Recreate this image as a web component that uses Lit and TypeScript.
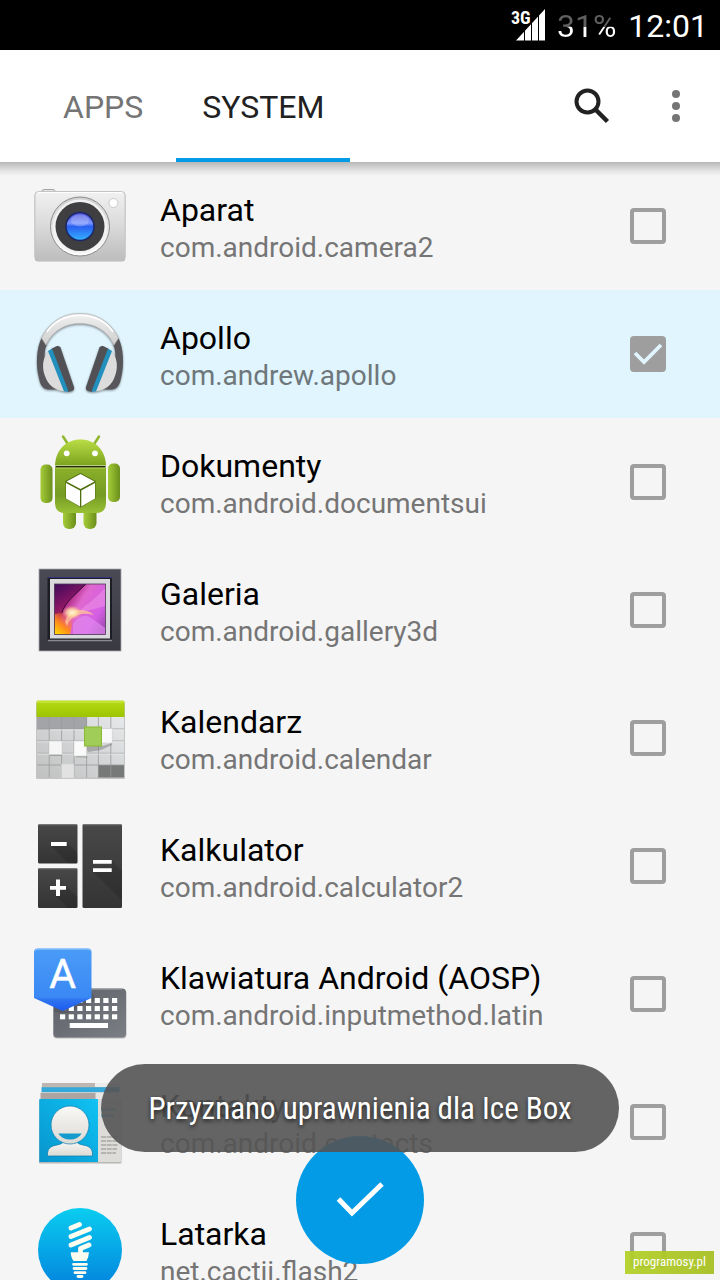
import { LitElement, html, svg, css, type SVGTemplateResult } from "lit";
import { customElement, state } from "lit/decorators.js";

interface AppEntry {
  name: string;
  pkg: string;
  icon: SVGTemplateResult;
  checked?: boolean;
}

const camera = svg`
  <defs>
    <linearGradient id="cam-body" x2="0" y2="1"><stop stop-color="#f1f1f1"/><stop offset=".5" stop-color="#dadada"/><stop offset="1" stop-color="#bdbdbd"/></linearGradient>
    <linearGradient id="cam-lens" x2="0" y2="1"><stop stop-color="#4a50d8"/><stop offset=".38" stop-color="#7c97ff"/><stop offset=".5" stop-color="#2a5ff0"/><stop offset="1" stop-color="#35b4ff"/></linearGradient>
    <linearGradient id="cam-ring" x2="0" y2="1"><stop stop-color="#cfcfcf"/><stop offset="1" stop-color="#ffffff"/></linearGradient>
  </defs>
  <rect x="10" y="11.500" width="13" height="6" rx="2" fill="#e4e4e4" stroke="#a4a4a4"/>
  <rect x="2.500" y="14" width="91" height="69.500" rx="4" fill="#000" opacity=".25"/>
  <rect x="3" y="13.500" width="90" height="68.500" rx="3.500" fill="url(#cam-body)" stroke="#c4c4c4"/>
  <path d="M6 14.500H90" stroke="#fff"/>
  <circle cx="48" cy="48.500" r="29.500" fill="url(#cam-ring)" stroke="#8c8c8c"/>
  <circle cx="48" cy="48.500" r="27" fill="#f2f2f2"/>
  <circle cx="48" cy="48.500" r="24.500" fill="#3f3f41"/>
  <circle cx="48" cy="48.500" r="14" fill="url(#cam-lens)" stroke="#1c2768" stroke-width="1.500"/>
  <ellipse cx="48" cy="42.500" rx="9" ry="6" fill="#fff" opacity=".22"/>
  <circle cx="81.500" cy="25" r="4.500" fill="#fff" stroke="#c9c9c9"/>`;

const earSide = svg`
  <path d="M10 31C4 42 4 60 6.500 70C8 78 10 83 16 83.500H25L14 62C12 54 12 44 15 38Z" fill="#57575b"/>
  <path d="M17 44.500C10 52 10 62 13 70C16 79 23 85 34 85.500Z" fill="#dcdcdc"/>
  <path d="M19 43L25 40Q27.500 39.500 28.500 41.500L42 81Q42.500 84 40 85L36 86Z" fill="#515155"/>
  <path d="M16 45L20 42.700L36.500 85.500L32 85.500Z" fill="#2190bd"/>`;

const headphones = svg`
  <defs><linearGradient id="hp-band" x2="0" y2="1"><stop stop-color="#f0f0f0"/><stop offset="1" stop-color="#cfcfcf"/></linearGradient></defs>
  <g filter="drop-shadow(0 1px 1px rgba(0,0,0,.45))">
    ${earSide}
    <g transform="matrix(-1 0 0 1 96 0)">${earSide}</g>
    <path d="M9.500 32C18 15 32 7.500 48 7.500S78 15 86.500 32L82 39C75 24 62 17.500 48 17.500S21 24 14 39Z" fill="url(#hp-band)" stroke="#b4b4b4" stroke-width=".7"/>
    <path d="M15 26C23 14 35 9.500 48 9.500S73 14 81 26" fill="none" stroke="#fff" stroke-width="1.500"/>
  </g>`;

const droid = svg`
  <defs>
    <linearGradient id="dr-head" x2="0" y2="1"><stop stop-color="#b9dd45"/><stop offset="1" stop-color="#7da31f"/></linearGradient>
    <linearGradient id="dr-body" x2="0" y2="1"><stop stop-color="#8bb02a"/><stop offset=".6" stop-color="#769b24"/><stop offset="1" stop-color="#98c035"/></linearGradient>
    <linearGradient id="dr-limb"><stop stop-color="#a5cc38"/><stop offset=".5" stop-color="#88ae2a"/><stop offset="1" stop-color="#6a8e1b"/></linearGradient>
  </defs>
  <path d="M31 2.500L35.500 9.500M67 2.500L62.500 9.500" stroke="#8fb62d" stroke-width="2.500" stroke-linecap="round"/>
  <rect x="31" y="70" width="13" height="25" rx="6" fill="url(#dr-limb)"/>
  <rect x="51.500" y="70" width="13" height="25" rx="6" fill="url(#dr-limb)"/>
  <rect x="8.500" y="30.500" width="12" height="38.500" rx="5" fill="url(#dr-limb)"/>
  <rect x="76" y="29.500" width="12" height="38.500" rx="5" fill="url(#dr-limb)"/>
  <path d="M23 31.500C23.500 16 34 5.500 48.500 5.500S73.500 16 74 31.500Z" fill="url(#dr-head)"/>
  <path d="M23 33.500H74V69Q74 79 64 79H33Q23 79 23 69Z" fill="url(#dr-body)"/>
  <path d="M23.500 32.700H73.500" stroke="#222f04" stroke-width="1.400"/>
  <path d="M24 34.300H73" stroke="#a5cd42"/>
  <circle cx="34.700" cy="19.300" r="2.900" fill="#fff"/><circle cx="63" cy="19.300" r="2.900" fill="#fff"/>
  <path d="M48.500 39L63.500 47V64.500L48.500 73.500L33.500 64.500V47Z" fill="#4e6e0e"/>
  <path d="M48.500 40L62.500 47.500L48.500 55L34.500 47.500ZM34 49L48 56.500V72.500L34 64.500ZM63 49L49.300 56.500V72.500L63 64.500Z" fill="#fff"/>`;

const gallery = svg`
  <defs>
    <linearGradient id="ga-pic" x1="0" y1=".2" x2="1" y2=".8"><stop stop-color="#57106f"/><stop offset=".22" stop-color="#a81f72"/><stop offset=".45" stop-color="#df68cf"/><stop offset=".8" stop-color="#d55fe4"/><stop offset="1" stop-color="#a64bb8"/></linearGradient>
    <linearGradient id="ga-dark" x1="0" y1="0" x2=".4" y2="1"><stop stop-color="#3d0a5c"/><stop offset=".5" stop-color="#8a1664"/><stop offset="1" stop-color="#e2452e"/></linearGradient>
    <linearGradient id="ga-fire" x1="0" y1="1" x2=".7" y2="0"><stop stop-color="#ffe000"/><stop offset=".45" stop-color="#ff8a1c"/><stop offset="1" stop-color="#ff5a50" stop-opacity="0"/></linearGradient>
    <linearGradient id="ga-frame" x2="0" y2="1"><stop stop-color="#4a4a55"/><stop offset="1" stop-color="#393942"/></linearGradient>
    <radialGradient id="ga-glow"><stop stop-color="#fff8d8"/><stop offset=".5" stop-color="#ffe0a0" stop-opacity=".8"/><stop offset="1" stop-color="#ffb080" stop-opacity="0"/></radialGradient>
  </defs>
  <rect x="7" y="7" width="82" height="82" fill="url(#ga-frame)" stroke="#a9a9ad" stroke-width=".8"/>
  <rect x="15.500" y="15.500" width="64.500" height="63" fill="#1d1d25"/>
  <path d="M15.500 15.500H80" stroke="#33337a"/><path d="M16 78.500H80" stroke="#8a8a90" stroke-width="1.500"/>
  <rect x="18" y="17" width="60" height="59.500" fill="#d9d9dd"/>
  <rect x="22.500" y="22" width="51" height="50.500" fill="url(#ga-pic)"/>
  <path d="M22.500 22H54C43 33 32 41 30 52L26 64L22.500 68Z" fill="url(#ga-dark)"/>
  <path d="M22.500 52L34 50L42 54L38 72.500H22.500Z" fill="url(#ga-fire)"/>
  <path d="M54 22C43 33 32 41 30 51" stroke="#2a0633" stroke-width=".9" fill="none"/>
  <path d="M48 48Q62 38 73.500 26V44Q60 48 48 50Z" fill="#f29bea" opacity=".45"/>
  <path d="M41 62Q47 52 56 54L73.500 66V72.500H41Z" fill="#e28ff2" opacity=".6"/>
  <path d="M33 60Q36 47 47 48Q57 48 62 53Q50 50 43 54Q37 58 35 64Z" fill="#ffc79a" opacity=".75"/>
  <ellipse cx="40" cy="50.500" rx="10" ry="7" fill="url(#ga-glow)"/>
  <rect x="22.500" y="22" width="51" height="50.500" fill="none" stroke="#4d3a55" stroke-width=".8"/>`;

const calendar = svg`
  <defs>
    <linearGradient id="ca-top" x2="0" y2="1"><stop stop-color="#b6da17"/><stop offset="1" stop-color="#9cc400"/></linearGradient>
    <linearGradient id="ca-grid" x1="1" y1="0" x2="0" y2="1"><stop stop-color="#e6e8ea"/><stop offset="1" stop-color="#bfc1c1"/></linearGradient>
  </defs>
  <rect x="4" y="12" width="89" height="77" rx="1" fill="#000" opacity=".2"/>
  <rect x="5" y="25" width="87" height="62.500" fill="url(#ca-grid)"/>
  <rect x="5" y="26" width="50" height="13" fill="#a3a4a7"/>
  <rect x="66" y="75" width="26" height="12.500" fill="#777878"/>
  <path d="M17.200 27V87.500M29.600 27V87.500M42 27V87.500M54.600 27V87.500M66.400 27V87.500M78.800 27V87.500M5 39H92M5 51H92M5 63.300H92M5 75H92" stroke="#999b9b" stroke-width=".8" fill="none"/>
  <path d="M18 39.800H92M5 51.800H92M5 64H92" stroke="#f2f2f2" stroke-width=".7"/>
  <path d="M4.500 27V12Q4.500 10.500 6 10.500H91Q92.500 10.500 92.500 12V27Z" fill="url(#ca-top)"/>
  <path d="M5 12H92" stroke="#d2ec4e"/>
  <path d="M17 54L30 66H18ZM42 56L56 67.500H44ZM53 56H70L80 53V55L69 60L56 62Z" fill="#555" opacity=".35"/>
  <g stroke="#d0d0d0" stroke-width=".6">
    <rect x="17" y="51" width="13" height="13.500" fill="#f6f6f6"/>
    <rect x="42" y="51" width="12.700" height="15" fill="#fafafa"/>
    <rect x="69.500" y="38.500" width="10.700" height="14.500" fill="#f8f8fa"/>
    <rect x="29.500" y="74" width="12.500" height="14" fill="#e2e2e2"/>
  </g>
  <rect x="52.500" y="37" width="17" height="19" fill="#a0cd58" stroke="#8abb33"/>`;

const calculator = svg`
  <defs><linearGradient id="kc" x2="0" y2="1"><stop stop-color="#484848"/><stop offset="1" stop-color="#343434"/></linearGradient></defs>
  <rect x="6" y="6" width="39.500" height="39.500" rx="1.500" fill="url(#kc)"/>
  <rect x="6" y="50" width="39.500" height="40" rx="1.500" fill="url(#kc)"/>
  <rect x="50.500" y="6" width="39.500" height="84" rx="1.500" fill="url(#kc)"/>
  <path d="M7 6.700H45M7 50.700H45M51.500 6.700H89" stroke="#777" stroke-width="1.300"/>
  <path d="M19 28H34.500V24L45.500 35V45.500H36.500ZM24 78L34 68L45.500 79V90H36ZM61 54H79.700V42.500L90 53V82Z" fill="#000" opacity=".13"/>
  <path d="M19 24H34.700V28H19ZM18 68H34V71.700H18ZM24 61.500H28V78H24ZM61 42H79.700V45.700H61ZM61 50.300H79.700V54H61Z" fill="#fff"/>`;

const keyRows = [52, 60, 68.3];
const keyCols = [28, 36.7, 45.3, 54, 62.7, 71.3, 80];
const keyboard = svg`
  <defs>
    <linearGradient id="kb-blue" x2="0" y2="1"><stop stop-color="#4a9cf8"/><stop offset=".78" stop-color="#3a88f4"/><stop offset=".82" stop-color="#2f74f0"/><stop offset="1" stop-color="#1c5bf0"/></linearGradient>
    <linearGradient id="kb-grey" x2="1" y2="1"><stop stop-color="#5c6066"/><stop offset="1" stop-color="#7b7f85"/></linearGradient>
  </defs>
  <rect x="21" y="43.500" width="73.500" height="49" rx="4" fill="#000" opacity=".25"/>
  <rect x="21.500" y="42.500" width="72.500" height="49" rx="4" fill="url(#kb-grey)"/>
  <path d="M25 43.200H90" stroke="#969aa0"/>
  <path d="M60 46L64 54L36 67H26L24 50Z" fill="#45494f" opacity=".4"/>
  ${keyRows.map((y) => keyCols.map((x) => svg`<rect x=${x} y=${y} width="5.200" height="5" fill="#fff"/>`))}
  <rect x="37.700" y="77" width="38.300" height="5" fill="#fff"/>
  <path d="M22 60H33V66H22Z" fill="#575b61"/>
  <path d="M2 52V6Q2 2.500 5.500 2.500H56Q59.500 2.500 59.500 6V52L30.700 65Z" fill="url(#kb-blue)"/>
  <path d="M3 5Q4 3.200 6 3.200H55.500Q57.500 3.200 58.500 5" stroke="#8cc4ff" fill="none"/>
  <text x="30.700" y="42" text-anchor="middle" font-family="Roboto, sans-serif" font-size="41" font-weight="400" fill="#fff" stroke="#fff" stroke-width=".5">A</text>`;

const contacts = svg`
  <defs>
    <linearGradient id="co-blue" x1="1" x2="0" y2="1"><stop stop-color="#10c3f4"/><stop offset="1" stop-color="#0794cc"/></linearGradient>
    <linearGradient id="co-fig" x2="0" y2="1"><stop stop-color="#f8f8f6"/><stop offset="1" stop-color="#dcdad4"/></linearGradient>
  </defs>
  <path d="M10 9H87V14H10Z" fill="#bdb6b1"/><path d="M63 9H87V13H63Z" fill="#ececea"/>
  <path d="M9.500 13.300H87.500V18.300H9.500Z" fill="#35a8da"/>
  <path d="M8.500 18.700H88V25H8.500Z" fill="#ada5a2"/><path d="M63.500 18.700H88V25H63.500Z" fill="#e6e6e4"/>
  <rect x="7" y="26" width="82.500" height="63.500" rx="1" fill="#000" opacity=".25"/>
  <path d="M66 25H89V88H66Z" fill="#dddcd9"/>
  <path d="M7.300 25H66V88H7.300Z" fill="url(#co-blue)"/>
  <path d="M69 35.500H84M69 41.500H82" stroke="#69bddf" stroke-width="2.500" stroke-dasharray="3 .7"/>
  <path d="M69 63H86M69 67H86M69 71H86M69 75H85M69 79H84" stroke="#a7a6a3" stroke-width="1.700" stroke-dasharray="5 .7"/>
  <path d="M15.500 82V79Q16 72 25 71Q31 70 32 67H44Q45 70 51 71Q60 72 60.500 79V82Z" fill="url(#co-fig)" stroke="#087aac" stroke-width=".7"/>
  <circle cx="38" cy="51" r="19" fill="url(#co-fig)" stroke="#087aac" stroke-width=".7"/>
  <path d="M26.300 59.500H49.700Q46 65.500 38 65.500T26.300 59.500Z" fill="#129bcc"/>`;

const bulb = svg`
  <defs><linearGradient id="bu" x2="0" y2="1"><stop stop-color="#0acdf0"/><stop offset="1" stop-color="#0280dc"/></linearGradient></defs>
  <circle cx="48" cy="48" r="42" fill="url(#bu)"/>
  <path d="M39 26L47.500 22.500M39 34.500L57.500 27M39 43L57.500 35.500M48.500 51V46.500L57 43" fill="none" stroke="#fdfdf0" stroke-width="4.800" stroke-linecap="round" stroke-linejoin="round"/>
  <path d="M38.700 50.300H57Q56.500 56 54.500 59H41.500Q39 56 38.700 50.300Z" fill="#fdfdf0"/>
  <path d="M41.500 62.300H54.500M42 66.500H54M43 70.700H53M46 74.500H50" stroke="#fdfdf0" stroke-width="2.800" stroke-linecap="round"/>`;

const ENTRIES: AppEntry[] = [
  { name: "Aparat", pkg: "com.android.camera2", icon: camera },
  { name: "Apollo", pkg: "com.andrew.apollo", icon: headphones, checked: true },
  { name: "Dokumenty", pkg: "com.android.documentsui", icon: droid },
  { name: "Galeria", pkg: "com.android.gallery3d", icon: gallery },
  { name: "Kalendarz", pkg: "com.android.calendar", icon: calendar },
  { name: "Kalkulator", pkg: "com.android.calculator2", icon: calculator },
  { name: "Klawiatura Android (AOSP)", pkg: "com.android.inputmethod.latin", icon: keyboard },
  { name: "Kontakty", pkg: "com.android.contacts", icon: contacts },
  { name: "Latarka", pkg: "net.cactii.flash2", icon: bulb },
];

@customElement("app-root")
export class AppRoot extends LitElement {
  @state() private selected = new Set(ENTRIES.filter((e) => e.checked).map((e) => e.pkg));

  static styles = css`
    :host {
      display: flex;
      flex-direction: column;
      position: relative;
      height: 100vh;
      overflow: hidden;
      background: #f5f5f5;
      font-family: Roboto, "Noto Sans", sans-serif;
      color: #000;
    }
    * { box-sizing: border-box; }
    button { border: 0; padding: 0; margin: 0; background: none; font: inherit; color: inherit; }
    svg { display: block; }
    .status {
      flex: none;
      display: flex;
      justify-content: flex-end;
      align-items: center;
      height: 50px;
      padding: 2px 12px 0 0;
      background: #000;
      color: #fff;
      font-size: 32px;
      line-height: 40px;
    }
    .signal { margin: 0 10px 4px 0; }
    .battery {
      margin-right: 12px;
      background: linear-gradient(#606060 0 53%, #fff 53%);
      -webkit-background-clip: text;
      background-clip: text;
      color: transparent;
    }
    .bar {
      flex: none;
      position: relative;
      z-index: 1;
      display: flex;
      align-items: stretch;
      height: 112px;
      padding: 0 28px 0 37px;
      background: #fff;
    }
    .bar::after {
      content: "";
      position: absolute;
      top: 100%;
      left: 0;
      right: 0;
      height: 14px;
      background: linear-gradient(rgba(0, 0, 0, 0.25), rgba(0, 0, 0, 0.08) 60%, transparent);
      pointer-events: none;
    }
    .tabs { display: flex; gap: 7px; flex: 1; }
    .tab {
      padding: 2px 26px 0;
      font-size: 32px;
      line-height: 40px;
      color: #757575;
      border-bottom: 4px solid transparent;
      border-top: 4px solid transparent;
    }
    .tab.active { color: #212121; border-bottom-color: #039be5; }
    .tool { display: flex; align-items: center; }
    .search { margin-right: 50px; }
    .list { flex: 1; min-height: 0; overflow: hidden; margin: 0; padding: 0; list-style: none; }
    .row {
      display: flex;
      align-items: center;
      height: 128px;
      padding: 0 54px 0 32px;
      gap: 32px;
    }
    .row.on { background: #e1f5fe; }
    .icon { flex: none; width: 96px; height: 96px; }
    .text { flex: 1; min-width: 0; padding-top: 4px; }
    .name, .pkg { display: block; white-space: nowrap; }
    .name { font-size: 32px; line-height: 40px; }
    .pkg { font-size: 28px; line-height: 36px; color: #757575; }
    .on .pkg { color: #6e777b; }
    .box { position: relative; width: 36px; height: 36px; }
    .box input {
      display: block;
      appearance: none;
      width: 36px;
      height: 36px;
      margin: 0;
      border: 4px solid #9e9e9e;
      border-radius: 4px;
    }
    .box input:checked { background: #9e9e9e; }
    .box svg { position: absolute; inset: 0; pointer-events: none; }
    .fab {
      position: absolute;
      bottom: 16px;
      left: calc(50% - 64px);
      z-index: 2;
      width: 128px;
      height: 128px;
      display: grid;
      place-items: center;
      border-radius: 50%;
      background: #039be5;
    }
    .toast-layer {
      position: absolute;
      z-index: 3;
      left: 0;
      right: 0;
      bottom: 128px;
      display: flex;
      justify-content: center;
      pointer-events: none;
    }
    .toast {
      height: 88px;
      padding: 0 47px;
      border-radius: 44px;
      background: rgba(84, 84, 84, 0.9);
      color: #fff;
      font-family: "Roboto Condensed", "Liberation Sans Narrow", Roboto, sans-serif;
      font-size: 31px;
      line-height: 90px;
      white-space: nowrap;
      text-shadow: 0 2px 4px rgba(0, 0, 0, 0.7);
    }
    .mark {
      position: absolute;
      z-index: 4;
      right: 6px;
      bottom: 6px;
      width: 89px;
      height: 23px;
      background: linear-gradient(90deg, rgba(178, 208, 38, 0.93), rgba(168, 192, 36, 0.95));
      color: #fff;
      font-family: "Roboto Condensed", "Liberation Sans Narrow", Roboto, sans-serif;
      font-size: 13px;
      line-height: 22px;
      text-align: center;
      text-decoration: none;
    }
  `;

  private toggle(pkg: string) {
    const next = new Set(this.selected);
    if (!next.delete(pkg)) next.add(pkg);
    this.selected = next;
  }

  private renderRow(e: AppEntry) {
    const on = this.selected.has(e.pkg);
    return html`<li>
      <label class="row ${on ? "on" : ""}">
        <svg class="icon" viewBox="0 0 96 96" aria-hidden="true">${e.icon}</svg>
        <span class="text">
          <span class="name">${e.name}</span>
          <span class="pkg">${e.pkg}</span>
        </span>
        <span class="box">
          <input type="checkbox" .checked=${on} @change=${() => this.toggle(e.pkg)} />
          ${on
            ? html`<svg viewBox="0 0 36 36" width="36" height="36"><path d="M5 17L14 26L31 9" fill="none" stroke="#e1f5fe" stroke-width="3.800"/></svg>`
            : null}
        </span>
      </label>
    </li>`;
  }

  render() {
    return html`
      <div class="status">
        <svg class="signal" width="36" height="34" viewBox="0 0 36 34" aria-label="3G">
          <path d="M5 33.500L34 2V33.500Z" fill="#fff"/>
          <path d="M13.500 20V34M20.500 15V34M27.500 6V34" stroke="#000" stroke-width="1"/>
          <text x="0" y="17" fill="#fff" font-family="Roboto Condensed, Liberation Sans Narrow, Roboto" font-size="18" font-weight="700">3G</text>
        </svg>
        <span class="battery">31%</span>
        <span>12:01</span>
      </div>
      <header class="bar">
        <nav class="tabs" role="tablist">
          <button class="tab" role="tab">APPS</button>
          <button class="tab active" role="tab" aria-selected="true">SYSTEM</button>
        </nav>
        <button class="tool search" aria-label="Search">
          <svg width="36" height="36" viewBox="0 0 36 36"><circle cx="13.500" cy="13.500" r="11" fill="none" stroke="#212121" stroke-width="4"/><path d="M22 22L33.500 33.500" stroke="#212121" stroke-width="4.500"/></svg>
        </button>
        <button class="tool" aria-label="More">
          <svg width="32" height="32" viewBox="0 0 32 32" fill="#757575"><circle cx="16" cy="4" r="4"/><circle cx="16" cy="16" r="4"/><circle cx="16" cy="28" r="4"/></svg>
        </button>
      </header>
      <ul class="list">${ENTRIES.map((e) => this.renderRow(e))}</ul>
      <button class="fab" aria-label="OK">
        <svg width="48" height="36" viewBox="0 0 48 36"><path d="M2.500 17L16 31L46 2" fill="none" stroke="#fff" stroke-width="5"/></svg>
      </button>
      <div class="toast-layer"><div class="toast" role="status">Przyznano uprawnienia dla Ice Box</div></div>
      <a class="mark" href="#">programosy.pl</a>
    `;
  }
}
